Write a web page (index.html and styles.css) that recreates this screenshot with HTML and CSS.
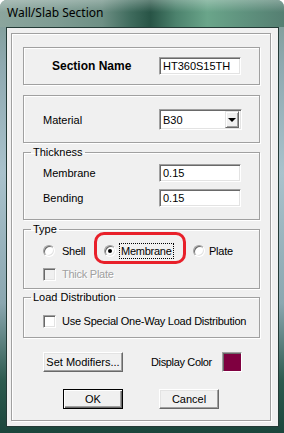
FILE: index.html
```html
<!DOCTYPE html>
<html lang="en">
<head>
  <meta charset="UTF-8" />
  <title>Wall/Slab Section</title>
  <link rel="stylesheet" href="styles.css">
</head>
<body>
  <div class="window">
    <div class="titlebar">Wall/Slab Section</div>
    <div class="client">
      <div class="frame">

        <div class="box box-name">
          <div class="row">
            <span class="label name">Section Name</span>
            <span class="field">HT360S15TH</span>
          </div>
        </div>

        <div class="box box-material">
          <div class="row">
            <span class="label">Material</span>
            <span class="combo">
              <span class="combo-text">B30</span>
              <span class="combo-btn"><span class="arrow"></span></span>
            </span>
          </div>
        </div>

        <fieldset class="group group-thick">
          <legend>Thickness</legend>
          <div class="row">
            <span class="label">Membrane</span>
            <span class="field">0.15</span>
          </div>
          <div class="row row-next">
            <span class="label">Bending</span>
            <span class="field">0.15</span>
          </div>
        </fieldset>

        <fieldset class="group group-type">
          <legend>Type</legend>
          <div class="options">
            <span class="opt opt-shell"><span class="radio"></span><span>Shell</span></span>
            <span class="opt opt-membrane"><span class="radio checked"></span><span class="focus">Membrane</span></span>
            <span class="opt"><span class="radio"></span><span>Plate</span></span>
          </div>
          <div class="options options-thick">
            <span class="opt disabled"><span class="check off"></span><span>Thick Plate</span></span>
          </div>
        </fieldset>

        <fieldset class="group group-load">
          <legend>Load Distribution</legend>
          <div class="options options-load">
            <span class="opt"><span class="check"></span><span>Use Special One-Way Load Distribution</span></span>
          </div>
        </fieldset>

        <div class="actions">
          <button class="btn btn-mod">Set Modifiers...</button>
          <span class="color-label">Display Color</span>
          <span class="swatch"></span>
        </div>

        <div class="actions actions-ok">
          <button class="btn btn-ok">OK</button>
          <button class="btn btn-cancel">Cancel</button>
        </div>

      </div>
    </div>
    <div class="mark"></div>
  </div>
</body>
</html>
```

FILE: styles.css
```css
body {
  margin: 0;
  background: #fff;
  font-family: "Liberation Sans", Arial, sans-serif;
  font-size: 11px;
  color: #000;
}
.window {
  position: relative;
  width: 284px;
  height: 433px;
  overflow: hidden;
  border-radius: 7px 7px 0 0;
  background: linear-gradient(to bottom, #7c9a91 0, #8fa9b0 15%, #a9c2cc 40%, #8ba7b0 70%, #2c5a4e 88%, #1b463c 100%);
}
.titlebar {
  height: 27px;
  line-height: 26px;
  padding-left: 7px;
  font-family: "Noto Sans", "Open Sans", sans-serif;
  font-size: 12px;
  color: #000;
  background:
    linear-gradient(to bottom, rgba(255,255,255,0.28) 0, rgba(255,255,255,0) 45%),
    linear-gradient(to right, #8ba59d 0, #7e9c93 20%, #6d8f84 36%, #3f6b5d 46%, #285446 53%, #4c826d 62%, #6aa58a 73%, #5f927e 86%, #557f72 100%);
}
.client {
  margin-left: 6px;
  width: 271px;
  height: 398px;
  border: 1px solid #233a36;
  background: #f0f0f0;
}
.frame {
  box-sizing: border-box;
  width: 260px;
  height: 388px;
  margin: 5px 0 0 4px;
  padding: 13px 10px 0 11px;
  border: 1px solid #a0a0a0;
  box-shadow: inset 1px 1px 0 #fff, 1px 1px 0 #fff;
}
.box,
.group {
  box-sizing: border-box;
  width: 237px;
  border: 1px solid #a0a0a0;
  box-shadow: inset 1px 1px 0 #fff, 1px 1px 0 #fff;
}
.group {
  margin: 3px 0 0;
  padding: 0;
  min-width: 0;
}
.group legend {
  margin-left: 7px;
  padding: 0 2px;
  line-height: 13px;
}
.box-name {
  padding: 9px 0;
}
.box-material {
  margin-top: 10px;
  padding: 13px 0 12px;
}
.row {
  display: flex;
  align-items: center;
  padding-left: 19px;
}
.label {
  width: 116px;
}
.label.name {
  width: 107px;
  padding-left: 9px;
  font-weight: bold;
  font-size: 12px;
}
.field {
  box-sizing: border-box;
  width: 82px;
  height: 18px;
  padding: 0 3px;
  line-height: 16px;
  background: #fff;
  border: 1px solid;
  border-color: #a0a0a0 #fff #fff #a0a0a0;
  box-shadow: inset 1px 1px 0 #696969, inset -1px -1px 0 #e3e3e3;
}
.combo {
  box-sizing: border-box;
  display: flex;
  align-items: center;
  width: 83px;
  height: 21px;
  padding: 2px;
  background: #fff;
  border: 1px solid;
  border-color: #a0a0a0 #fff #fff #a0a0a0;
  box-shadow: inset 1px 1px 0 #696969, inset -1px -1px 0 #e3e3e3;
}
.combo-text {
  flex: 1;
  padding-left: 1px;
}
.combo-btn {
  box-sizing: border-box;
  display: flex;
  align-items: center;
  justify-content: center;
  width: 14px;
  height: 17px;
  background: #f0f0f0;
  border: 1px solid;
  border-color: #e3e3e3 #696969 #696969 #e3e3e3;
  box-shadow: inset 1px 1px 0 #fff, inset -1px -1px 0 #a0a0a0;
}
.arrow {
  width: 0;
  height: 0;
  border-left: 4px solid transparent;
  border-right: 4px solid transparent;
  border-top: 4px solid #000;
}
.group-thick .row {
  margin-top: 5px;
}
.group-thick .row-next {
  margin-top: 7px;
}
.group-thick {
  padding-bottom: 12px;
}
.options {
  display: flex;
  align-items: center;
  height: 14px;
  margin-top: 8px;
  padding-left: 19px;
}
.options-thick {
  margin-top: 9px;
}
.group-type {
  padding-bottom: 7px;
}
.group-load {
  margin-top: 2px;
  padding-bottom: 9px;
}
.options-load {
  margin-top: 10px;
}
.opt {
  display: flex;
  align-items: center;
  gap: 7px;
  white-space: nowrap;
  letter-spacing: -0.25px;
}
.opt-shell {
  width: 61px;
}
.opt-membrane {
  width: 89px;
  gap: 4px;
}
.opt-membrane + .opt {
  gap: 4px;
}
.focus {
  padding: 0 1px;
  line-height: 14px;
  outline: 1px dotted #000;
}
.radio {
  box-sizing: border-box;
  display: flex;
  align-items: center;
  justify-content: center;
  width: 12px;
  height: 12px;
  border-radius: 50%;
  background: #fff;
  border: 1px solid;
  border-color: #a0a0a0 #fff #fff #a0a0a0;
  box-shadow: inset 1px 1px 0 #696969, inset -1px -1px 0 #e3e3e3;
}
.radio.checked::after {
  content: "";
  width: 4px;
  height: 4px;
  border-radius: 50%;
  background: #000;
}
.check {
  box-sizing: border-box;
  width: 13px;
  height: 13px;
  margin-right: -1px;
  background: #fff;
  border: 1px solid;
  border-color: #a0a0a0 #fff #fff #a0a0a0;
  box-shadow: inset 1px 1px 0 #696969, inset -1px -1px 0 #e3e3e3;
}
.check.off {
  background: #f0f0f0;
}
.disabled {
  color: #a0a0a0;
  text-shadow: 1px 1px 0 #fff;
}
.actions {
  display: flex;
  align-items: center;
  margin: 14px 0 0 20px;
}
.actions-ok {
  margin: 17px 0 0 40px;
}
.btn {
  box-sizing: border-box;
  height: 20px;
  padding: 0;
  white-space: nowrap;
  font-family: "Liberation Sans", Arial, sans-serif;
  font-size: 11px;
  color: #000;
  background: #f0f0f0;
  border: 1px solid;
  border-color: #fff #696969 #696969 #fff;
  box-shadow: inset -1px -1px 0 #a0a0a0, inset 1px 1px 0 #e3e3e3;
}
.btn-mod {
  width: 80px;
}
.btn-ok {
  width: 60px;
  border: 1px solid #000;
  box-shadow: inset 1px 1px 0 #fff, inset -1px -1px 0 #696969, inset -2px -2px 0 #a0a0a0;
}
.btn-cancel {
  width: 60px;
  margin-left: 36px;
}
.color-label {
  width: 71px;
  margin-left: 28px;
  letter-spacing: -0.35px;
}
.swatch {
  box-sizing: border-box;
  width: 20px;
  height: 20px;
  background: #7f0040;
  border: 1px solid;
  border-color: #a0a0a0 #fff #fff #a0a0a0;
  box-shadow: inset 1px 1px 0 #696969;
}
.mark {
  position: absolute;
  left: 94px;
  top: 232px;
  box-sizing: border-box;
  width: 92px;
  height: 32px;
  border: 3px solid #e8202a;
  border-radius: 10px;
}
```
